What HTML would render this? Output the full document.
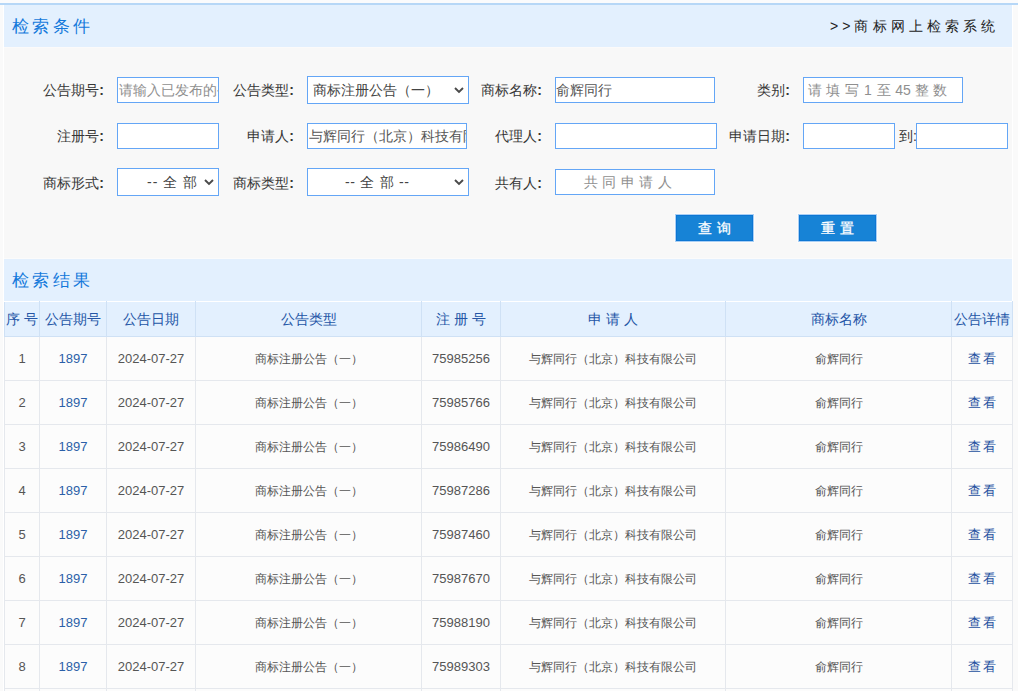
<!DOCTYPE html>
<html><head><meta charset="utf-8">
<style>
*{box-sizing:border-box;margin:0;padding:0}
html,body{width:1018px;height:691px;overflow:hidden;background:#fafbfd;font-family:"Liberation Sans",sans-serif;}
.topline{position:absolute;left:0;top:3px;width:1018px;height:2px;background:#b6d7f7}
.wrap{position:absolute;left:4px;top:5px;width:1008px;height:686px;background:#f8f8f8}
.lstrip{position:absolute;left:0;top:5px;width:4px;height:686px;background:#fafafa}
.rstrip{position:absolute;left:1012px;top:5px;width:6px;height:686px;background:#fafafa}
.hdr{position:absolute;left:4px;width:1008px;height:42px;background:#e3f0fe}
.ttl{position:absolute;left:12px;font-size:17px;color:#1479db;letter-spacing:3.4px;white-space:nowrap;line-height:20px}
.sys{position:absolute;left:830px;top:18px;font-size:14px;color:#222;letter-spacing:4.05px;white-space:nowrap;line-height:16px}
.lbl{position:absolute;font-size:14px;color:#363636;white-space:nowrap;line-height:16px;text-align:right}
.lbl i{font-style:normal;margin-left:0.5px;font-weight:bold}
.inp{position:absolute;background:#fff;border:1px solid #64a6f6;font-size:14px;color:#555;white-space:nowrap;overflow:hidden;line-height:24px}
.ph{color:#8f8f8f}
.sel{position:absolute;background:#fff;border:1px solid #64a6f6;font-size:14px;color:#444;white-space:nowrap;overflow:hidden;line-height:26px}
.chev{position:absolute;right:4px;top:9px;width:10px;height:8px}
.btn{position:absolute;top:214px;width:79px;height:28px;background:#1783d6;border:1px solid #a9cff5;box-shadow:0 0 0 1px #fdfbf9,inset 0 0 0 1px #0d76d3;color:#fff;font-size:14px;letter-spacing:5px;text-indent:5px;text-align:center;line-height:26px;-webkit-text-stroke:0.3px #fff}
table{position:absolute;left:4px;top:301px;border-collapse:collapse;table-layout:fixed;width:1009px}
td,th{border:1px solid #e5e8ed;text-align:center;white-space:nowrap;overflow:hidden}
th{border-color:#cfe1f5;background:#e3f0fe;color:#2455a6;font-size:14px;font-weight:normal;height:35px;padding-top:1px}
td{background:#fcfcfc;color:#555;font-size:13px;height:44px}
td.b{color:#2b5fa8}
.z{font-size:12px;position:relative;top:1px}
.z2{font-size:13px;letter-spacing:2px;margin-right:-2px;position:relative;top:0px}
td.v{color:#24509f}
tr.h th{border-top-color:#fff}
</style></head><body>
<div class="topline"></div>
<div class="lstrip"></div>
<div class="rstrip"></div>
<div class="wrap"></div>
<div class="hdr" style="top:5px"></div><div style="position:absolute;left:4px;top:47px;width:1008px;height:1px;background:#fbfafa"></div><div style="position:absolute;left:1012px;top:5px;width:1px;height:686px;background:#fff"></div><div style="position:absolute;left:3px;top:5px;width:1px;height:686px;background:#fff"></div>
<div class="ttl" style="top:17px">检索条件</div>
<div class="sys">&gt;&gt;商标网上检索系统</div>

<div class="lbl" style="left:28px;top:82px;width:76px">公告期号<i>:</i></div>
<div class="inp" style="left:117px;top:77px;width:102px;height:26px;padding-left:1px"><span class="ph">请输入已发布的公告期号</span></div>
<div class="lbl" style="left:218px;top:82px;width:76px">公告类型<i>:</i></div>
<div class="sel" style="left:307px;top:76px;width:162px;height:28px;padding-left:5px">商标注册公告（一）<svg class="chev" viewBox="0 0 10 8"><path d="M1 2 L5 6 L9 2" fill="none" stroke="#4a4a4a" stroke-width="1.9"/></svg></div>
<div class="lbl" style="left:466px;top:82px;width:76px">商标名称<i>:</i></div>
<div class="inp" style="left:555px;top:77px;width:160px;height:26px;padding-left:0px">俞辉同行</div>
<div class="lbl" style="left:714px;top:82px;width:76px">类别<i>:</i></div>
<div class="inp" style="left:803px;top:77px;width:160px;height:26px;padding-left:4px"><span class="ph" style="word-spacing:0.4px">请 填 写 <span style="margin:0 1px">1</span> 至 45 整 数</span></div>

<div class="lbl" style="left:28px;top:128px;width:76px">注册号<i>:</i></div>
<div class="inp" style="left:117px;top:123px;width:102px;height:26px"></div>
<div class="lbl" style="left:218px;top:128px;width:76px">申请人<i>:</i></div>
<div class="inp" style="left:307px;top:123px;width:160px;height:26px;padding-left:1px">与辉同行（北京）科技有限公司</div>
<div class="lbl" style="left:466px;top:128px;width:76px">代理人<i>:</i></div>
<div class="inp" style="left:555px;top:123px;width:162px;height:26px"></div>
<div class="lbl" style="left:714px;top:128px;width:76px">申请日期<i>:</i></div>
<div class="inp" style="left:803px;top:123px;width:92px;height:26px"></div>
<div class="lbl" style="left:899px;top:128px">到:</div>
<div class="inp" style="left:916px;top:123px;width:92px;height:26px"></div>

<div class="lbl" style="left:28px;top:175px;width:76px">商标形式<i>:</i></div>
<div class="sel" style="left:117px;top:168px;width:102px;height:28px;padding-left:29px;letter-spacing:1px">-- 全 部<svg class="chev" viewBox="0 0 10 8"><path d="M1 2 L5 6 L9 2" fill="none" stroke="#4a4a4a" stroke-width="1.9"/></svg></div>
<div class="lbl" style="left:218px;top:175px;width:76px">商标类型<i>:</i></div>
<div class="sel" style="left:307px;top:168px;width:162px;height:28px;padding-left:37px;letter-spacing:0.7px">-- 全 部 --<svg class="chev" viewBox="0 0 10 8"><path d="M1 2 L5 6 L9 2" fill="none" stroke="#4a4a4a" stroke-width="1.9"/></svg></div>
<div class="lbl" style="left:466px;top:175px;width:76px">共有人<i>:</i></div>
<div class="inp" style="left:555px;top:169px;width:160px;height:26px;padding-left:28px;letter-spacing:0.3px"><span class="ph">共 同 申 请 人</span></div>

<div class="btn" style="left:675px">查询</div>
<div class="btn" style="left:798px">重置</div>

<div class="hdr" style="top:258px;height:43px;border-top:1px solid #fbfbfb"></div>
<div class="ttl" style="top:271px">检索结果</div>

<table>
<colgroup><col style="width:35px"><col style="width:67px"><col style="width:89px"><col style="width:226px"><col style="width:79px"><col style="width:225px"><col style="width:226px"><col style="width:61px"></colgroup>
<tr class="h"><th>序 号</th><th>公告期号</th><th>公告日期</th><th>公告类型</th><th>注 册 号</th><th>申 请 人</th><th>商标名称</th><th>公告详情</th></tr>
<tr><td>1</td><td class="b">1897</td><td>2024-07-27</td><td><span class="z">商标注册公告（一）</span></td><td>75985256</td><td><span class="z">与辉同行（北京）科技有限公司</span></td><td><span class="z">俞辉同行</span></td><td class="b v"><span class="z2">查看</span></td></tr>
<tr><td>2</td><td class="b">1897</td><td>2024-07-27</td><td><span class="z">商标注册公告（一）</span></td><td>75985766</td><td><span class="z">与辉同行（北京）科技有限公司</span></td><td><span class="z">俞辉同行</span></td><td class="b v"><span class="z2">查看</span></td></tr>
<tr><td>3</td><td class="b">1897</td><td>2024-07-27</td><td><span class="z">商标注册公告（一）</span></td><td>75986490</td><td><span class="z">与辉同行（北京）科技有限公司</span></td><td><span class="z">俞辉同行</span></td><td class="b v"><span class="z2">查看</span></td></tr>
<tr><td>4</td><td class="b">1897</td><td>2024-07-27</td><td><span class="z">商标注册公告（一）</span></td><td>75987286</td><td><span class="z">与辉同行（北京）科技有限公司</span></td><td><span class="z">俞辉同行</span></td><td class="b v"><span class="z2">查看</span></td></tr>
<tr><td>5</td><td class="b">1897</td><td>2024-07-27</td><td><span class="z">商标注册公告（一）</span></td><td>75987460</td><td><span class="z">与辉同行（北京）科技有限公司</span></td><td><span class="z">俞辉同行</span></td><td class="b v"><span class="z2">查看</span></td></tr>
<tr><td>6</td><td class="b">1897</td><td>2024-07-27</td><td><span class="z">商标注册公告（一）</span></td><td>75987670</td><td><span class="z">与辉同行（北京）科技有限公司</span></td><td><span class="z">俞辉同行</span></td><td class="b v"><span class="z2">查看</span></td></tr>
<tr><td>7</td><td class="b">1897</td><td>2024-07-27</td><td><span class="z">商标注册公告（一）</span></td><td>75988190</td><td><span class="z">与辉同行（北京）科技有限公司</span></td><td><span class="z">俞辉同行</span></td><td class="b v"><span class="z2">查看</span></td></tr>
<tr><td>8</td><td class="b">1897</td><td>2024-07-27</td><td><span class="z">商标注册公告（一）</span></td><td>75989303</td><td><span class="z">与辉同行（北京）科技有限公司</span></td><td><span class="z">俞辉同行</span></td><td class="b v"><span class="z2">查看</span></td></tr>
<tr><td>9</td><td class="b">1897</td><td>2024-07-27</td><td><span class="z">商标注册公告（一）</span></td><td>75989304</td><td><span class="z">与辉同行（北京）科技有限公司</span></td><td><span class="z">俞辉同行</span></td><td class="b v"><span class="z2">查看</span></td></tr>
</table>
</body></html>
